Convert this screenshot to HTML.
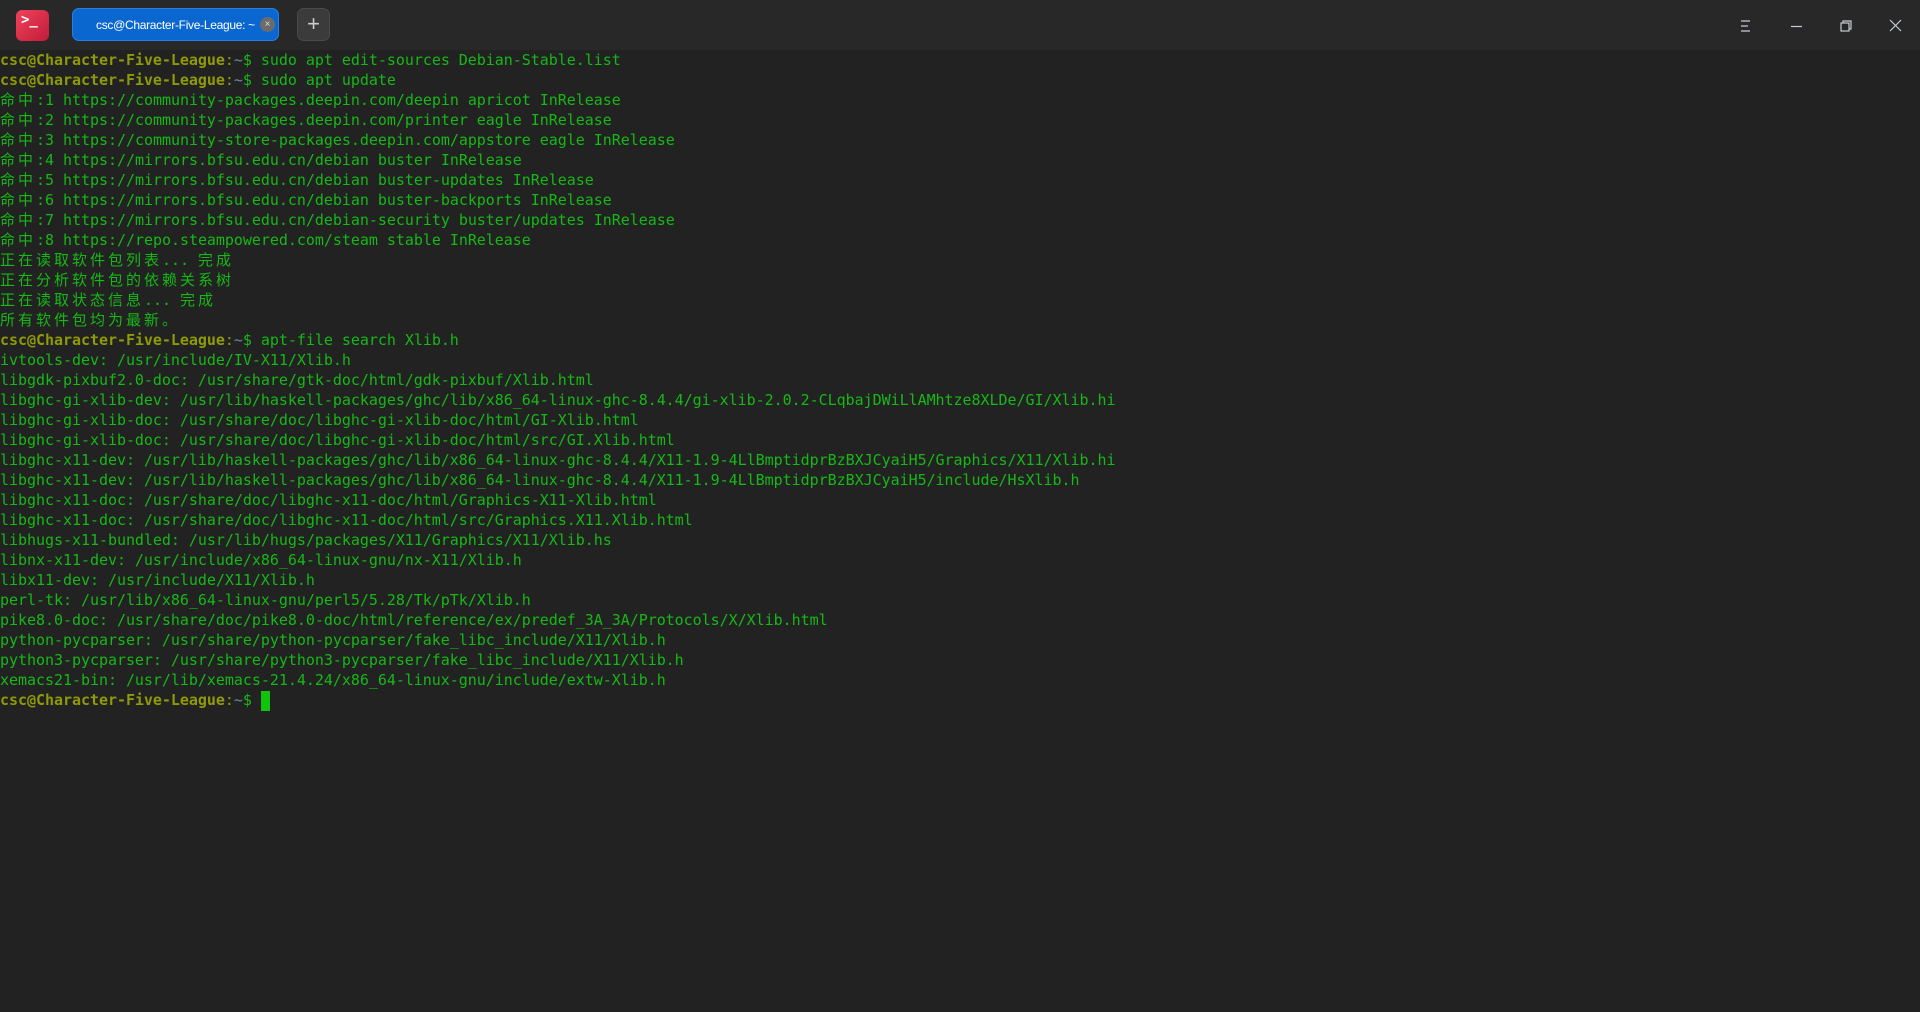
<!DOCTYPE html>
<html><head><meta charset="utf-8"><style>
html,body{margin:0;padding:0;width:1920px;height:1012px;background:#222222;overflow:hidden}
#bar{position:absolute;left:0;top:0;width:1920px;height:50px;background:#282828}
#logo{position:absolute;left:16px;top:10px;width:33px;height:31px;border-radius:6px;background:linear-gradient(135deg,#f0435a,#c01c3a)}
#logo span{position:absolute;left:5px;top:2px;color:#fff;font:bold 14px "DejaVu Sans Mono",monospace}
#tab{position:absolute;left:72px;top:8px;width:207px;height:33px;border-radius:7px;background:#0a67cf;box-sizing:border-box;border:1px solid #2a7ee0}
#tab .t{position:absolute;left:23px;top:9px;color:#fff;font:12px "Liberation Sans",sans-serif;letter-spacing:-0.3px}
#tab .x{position:absolute;left:187px;top:8px;width:15px;height:15px;border-radius:50%;background:#6b6b6b;color:#ddd;font:10px "Liberation Sans",sans-serif;text-align:center;line-height:15px}
#plus{position:absolute;left:297px;top:8px;width:33px;height:33px;border-radius:7px;background:#3b3b3b;box-sizing:border-box;border:1px solid #4a4a4a;color:#ccc;font:22px "Liberation Sans",sans-serif;text-align:center;line-height:30px}
#term{position:absolute;left:0;top:50px;font:15px "DejaVu Sans Mono",monospace;color:#16b816;white-space:pre;line-height:20px;letter-spacing:-0.035px}
.p{color:#8e9a07;font-weight:bold}
.c{color:#8e9a07}.h{color:#6c8aa8}
.z{letter-spacing:3px;font-family:"DejaVu Sans Mono","Noto Sans CJK SC",monospace}
#cur{position:absolute;left:261px;top:691px;width:9px;height:20px;background:#0fc30f}
</style></head><body>
<div id="bar">
<div id="logo"><span>&gt;_</span></div>
<div id="tab"><div class="t">csc@Character-Five-League: ~</div><div class="x">×</div></div>
<div id="plus">+</div>
<svg style="position:absolute;left:1735px;top:14px" width="180" height="24" fill="none" stroke="#c9ccd4" stroke-width="1.2">
<path d="M6 7h9M6 12h7M6 17h9"/>
<path d="M56 12.5h11"/>
<rect x="106" y="9" width="8" height="8"/><path d="M108 9V7h8v8h-2"/>
<path d="M155 6l11 11M166 6l-11 11"/>
</svg>
</div>
<div id="term"><span class="p">csc@Character-Five-League</span><span class="c">:</span><span class="h">~</span>$ sudo apt edit-sources Debian-Stable.list
<span class="p">csc@Character-Five-League</span><span class="c">:</span><span class="h">~</span>$ sudo apt update
<span class="z">命中</span>:1 https://community-packages.deepin.com/deepin apricot InRelease
<span class="z">命中</span>:2 https://community-packages.deepin.com/printer eagle InRelease
<span class="z">命中</span>:3 https://community-store-packages.deepin.com/appstore eagle InRelease
<span class="z">命中</span>:4 https://mirrors.bfsu.edu.cn/debian buster InRelease
<span class="z">命中</span>:5 https://mirrors.bfsu.edu.cn/debian buster-updates InRelease
<span class="z">命中</span>:6 https://mirrors.bfsu.edu.cn/debian buster-backports InRelease
<span class="z">命中</span>:7 https://mirrors.bfsu.edu.cn/debian-security buster/updates InRelease
<span class="z">命中</span>:8 https://repo.steampowered.com/steam stable InRelease
<span class="z">正在读取软件包列表</span>... <span class="z">完成</span>
<span class="z">正在分析软件包的依赖关系树</span>
<span class="z">正在读取状态信息</span>... <span class="z">完成</span>
<span class="z">所有软件包均为最新。</span>
<span class="p">csc@Character-Five-League</span><span class="c">:</span><span class="h">~</span>$ apt-file search Xlib.h
ivtools-dev: /usr/include/IV-X11/Xlib.h
libgdk-pixbuf2.0-doc: /usr/share/gtk-doc/html/gdk-pixbuf/Xlib.html
libghc-gi-xlib-dev: /usr/lib/haskell-packages/ghc/lib/x86_64-linux-ghc-8.4.4/gi-xlib-2.0.2-CLqbajDWiLlAMhtze8XLDe/GI/Xlib.hi
libghc-gi-xlib-doc: /usr/share/doc/libghc-gi-xlib-doc/html/GI-Xlib.html
libghc-gi-xlib-doc: /usr/share/doc/libghc-gi-xlib-doc/html/src/GI.Xlib.html
libghc-x11-dev: /usr/lib/haskell-packages/ghc/lib/x86_64-linux-ghc-8.4.4/X11-1.9-4LlBmptidprBzBXJCyaiH5/Graphics/X11/Xlib.hi
libghc-x11-dev: /usr/lib/haskell-packages/ghc/lib/x86_64-linux-ghc-8.4.4/X11-1.9-4LlBmptidprBzBXJCyaiH5/include/HsXlib.h
libghc-x11-doc: /usr/share/doc/libghc-x11-doc/html/Graphics-X11-Xlib.html
libghc-x11-doc: /usr/share/doc/libghc-x11-doc/html/src/Graphics.X11.Xlib.html
libhugs-x11-bundled: /usr/lib/hugs/packages/X11/Graphics/X11/Xlib.hs
libnx-x11-dev: /usr/include/x86_64-linux-gnu/nx-X11/Xlib.h
libx11-dev: /usr/include/X11/Xlib.h
perl-tk: /usr/lib/x86_64-linux-gnu/perl5/5.28/Tk/pTk/Xlib.h
pike8.0-doc: /usr/share/doc/pike8.0-doc/html/reference/ex/predef_3A_3A/Protocols/X/Xlib.html
python-pycparser: /usr/share/python-pycparser/fake_libc_include/X11/Xlib.h
python3-pycparser: /usr/share/python3-pycparser/fake_libc_include/X11/Xlib.h
xemacs21-bin: /usr/lib/xemacs-21.4.24/x86_64-linux-gnu/include/extw-Xlib.h
<span class="p">csc@Character-Five-League</span><span class="c">:</span><span class="h">~</span>$ </div>
<div id="cur"></div>
</body></html>
